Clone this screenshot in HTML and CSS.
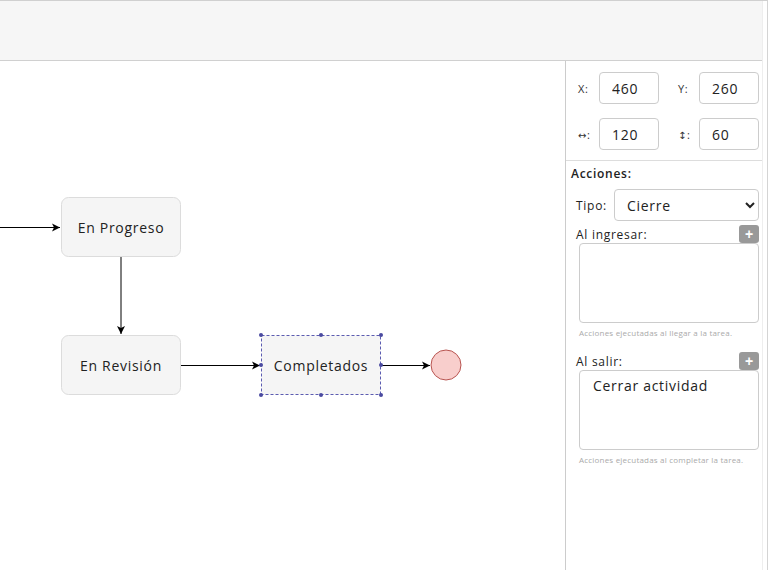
FILE: index.html
```html
<!DOCTYPE html>
<html lang="es">
<head>
  <meta charset="UTF-8">
  <title>Editor de flujo</title>
  <link rel="stylesheet" href="styles.css">
</head>
<body>

<div class="app">
  <div class="app-inner">
    <div class="toolbar"></div>

    <div class="workspace">
      <!-- Lienzo del diagrama -->
      <div class="canvas">
        <svg class="diagram" width="565" height="509" viewBox="0 61 565 509">
          <defs>
            <marker id="arrow" markerWidth="9" markerHeight="9" refX="8" refY="4.5" orient="auto" markerUnits="userSpaceOnUse">
              <path d="M0,0.5 L8,4.5 L0,8.5 L2,4.5 Z" fill="#000"/>
            </marker>
          </defs>

          <line x1="0" y1="227.5" x2="60" y2="227.5" class="edge" marker-end="url(#arrow)"/>
          <line x1="121" y1="257" x2="121" y2="334" class="edge" marker-end="url(#arrow)"/>
          <line x1="181" y1="365.5" x2="260" y2="365.5" class="edge" marker-end="url(#arrow)"/>
          <line x1="381" y1="365.5" x2="430" y2="365.5" class="edge" marker-end="url(#arrow)"/>

          <rect x="61.5" y="197.5" width="119" height="59" rx="7" class="node"/>
          <text x="121" y="229" class="label">En Progreso</text>

          <rect x="61.5" y="335.5" width="119" height="59" rx="7" class="node"/>
          <text x="121" y="367" class="label">En Revisión</text>

          <rect x="261.5" y="335.5" width="119" height="59" class="node selected"/>
          <text x="321" y="367" class="label">Completados</text>
          <rect x="261.5" y="335.5" width="119" height="59" class="selection"/>
          <g class="handles">
            <circle cx="261" cy="335" r="2"/><circle cx="321" cy="335" r="2"/><circle cx="381" cy="335" r="2"/>
            <circle cx="261" cy="365" r="2"/><circle cx="381" cy="365" r="2"/>
            <circle cx="261" cy="395" r="2"/><circle cx="321" cy="395" r="2"/><circle cx="381" cy="395" r="2"/>
          </g>

          <circle cx="446" cy="365" r="15" class="end"/>
        </svg>
      </div>

      <!-- Panel de propiedades -->
      <div class="panel">
        <div class="coords">
          <div class="coord-row">
            <div class="field"><label>X:</label><input value="460"></div>
            <div class="field"><label>Y:</label><input value="260"></div>
          </div>
          <div class="coord-row">
            <div class="field"><label><span class="sym">↔</span>:</label><input value="120"></div>
            <div class="field"><label><span class="sym">↕</span>:</label><input value="60"></div>
          </div>
        </div>

        <div class="actions">
          <div class="actions-title">Acciones:</div>
          <div class="actions-body">
            <div class="type-row">
              <label>Tipo:</label>
              <select>
                <option>Cierre</option>
                <option>Inicio</option>
                <option>Tarea</option>
              </select>
            </div>

            <div class="list-head">
              <span>Al ingresar:</span>
              <button class="add-btn">+</button>
            </div>
            <textarea></textarea>
            <div class="hint">Acciones ejecutadas al llegar a la tarea.</div>

            <div class="list-head second">
              <span>Al salir:</span>
              <button class="add-btn">+</button>
            </div>
            <textarea>Cerrar actividad</textarea>
            <div class="hint">Acciones ejecutadas al completar la tarea.</div>
          </div>
        </div>
      </div>
    </div>
  </div>
</div>

</body>
</html>
```

FILE: styles.css
```css
html, body {
  margin: 0;
  padding: 0;
  height: 100%;
  overflow: hidden;
  background-color: #fff;
  font-family: "Open Sans", Arial, sans-serif;
  letter-spacing: 0.045em;
  color: #222;
}

.app {
  height: 570px;
  border-right: 1px solid #d4d4d4;
  padding-right: 4px;
  border-top: 1px solid #d0d0d0;
  box-sizing: border-box;
}

.app-inner {
  height: 100%;
  border-right: 1px solid #eee;
  display: flex;
  flex-direction: column;
}

.toolbar {
  height: 59px;
  background-color: #f6f6f6;
  border-bottom: 1px solid #d0d0d0;
}

.workspace {
  flex: 1;
  display: flex;
  min-height: 0;
}

.canvas {
  flex: 1;
  overflow: hidden;
}

.diagram {
  display: block;
}

.edge {
  stroke: #000;
  stroke-width: 1;
}

.node {
  fill: #f5f5f5;
  stroke: #dcdcdc;
  stroke-width: 1;
}

.node.selected {
  stroke: none;
}

.selection {
  fill: none;
  stroke: #5b5bb0;
  stroke-width: 1;
  stroke-dasharray: 3 2;
}

.handles circle {
  fill: #4a4aa0;
}

.end {
  fill: #f8cecc;
  stroke: #b85450;
  stroke-width: 1;
}

.label {
  font-family: "Open Sans", Arial, sans-serif;
  font-size: 14px;
  letter-spacing: 0.05em;
  fill: #222;
  text-anchor: middle;
  dominant-baseline: middle;
}

/* panel */
.panel {
  width: 196px;
  border-left: 1px solid #ccc;
  font-size: 12px;
}

.coords {
  padding: 11px 3px 10px 12px;
  border-bottom: 1px solid #ddd;
  display: flex;
  flex-direction: column;
  gap: 14px;
}

.coord-row {
  display: flex;
  justify-content: space-between;
}

.field {
  display: flex;
  align-items: center;
}

.field label {
  width: 21px;
  font-size: 11px;
  color: #333;
}

.sym {
  font-family: "DejaVu Sans", sans-serif;
  font-size: 10px;
}

input, select, textarea {
  font-family: "Open Sans", Arial, sans-serif;
  font-size: 14px;
  letter-spacing: 0.05em;
  color: #222;
  border: 1px solid #ccc;
  border-radius: 4px;
  background: #fff;
  box-sizing: border-box;
  outline: none;
}

.field input {
  width: 60px;
  height: 32px;
  padding: 0 0 0 12px;
}

.actions {
  padding: 5px 3px 0 5px;
}

.actions-title {
  font-size: 12px;
  font-weight: 600;
  line-height: 16px;
}

.actions-body {
  padding-left: 5px;
}

.type-row {
  display: flex;
  align-items: center;
  margin-top: 7px;
}

.type-row label {
  width: 38px;
  font-size: 12px;
}

.type-row select {
  width: 145px;
  height: 32px;
  padding: 0 6px 0 8px;
}

.list-head {
  display: flex;
  justify-content: space-between;
  align-items: center;
  height: 18px;
  margin-top: 4px;
  font-size: 12px;
}

.list-head.second {
  margin-top: 13px;
}

.add-btn {
  width: 20px;
  height: 18px;
  padding: 0;
  border: none;
  border-radius: 3px;
  background-color: #999;
  color: #fff;
  font-weight: bold;
  font-size: 14px;
  line-height: 18px;
  cursor: pointer;
}

textarea {
  display: block;
  width: 180px;
  height: 80px;
  margin-left: 3px;
  padding: 5px 13px;
  resize: none;
}

.hint {
  margin: 4px 0 0 3px;
  font-size: 8px;
  line-height: 12px;
  letter-spacing: 0.2px;
  white-space: nowrap;
  color: #aaa;
}
```
